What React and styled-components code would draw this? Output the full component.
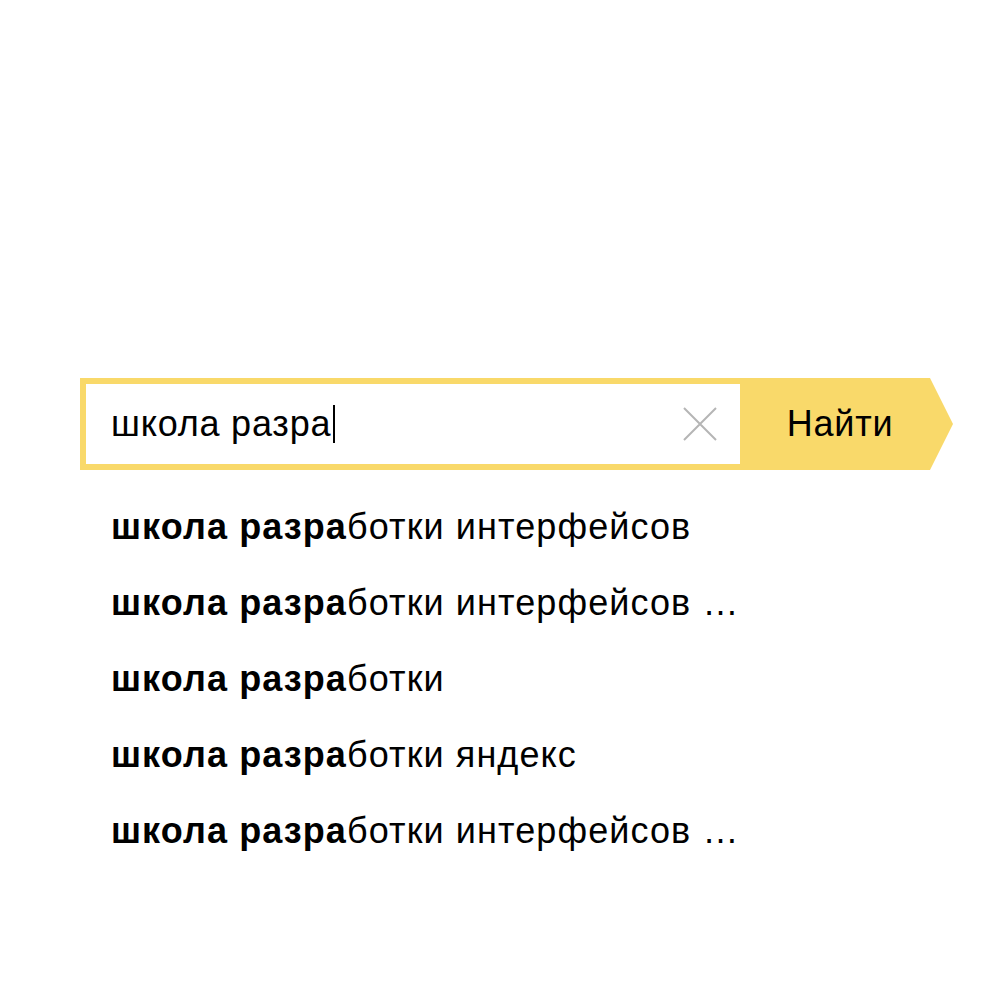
import styled, { createGlobalStyle } from "styled-components";

const GlobalStyle = createGlobalStyle`
  body {
    margin: 0;
    background: #fff;
    font-family: "Liberation Sans", Arial, sans-serif;
  }
`;

const Page = styled.div`
  width: 1000px;
  height: 1000px;
  padding: 378px 0 0 80px;
  box-sizing: border-box;
`;

const Form = styled.div`
  display: flex;
  height: 92px;
`;

const InputBox = styled.div`
  width: 660px;
  box-sizing: border-box;
  border: 6px solid #f9d96a;
  border-right: none;
  display: flex;
  align-items: center;
  padding: 0 23px 0 25px;
  font-size: 36px;
  letter-spacing: 0.8px;
  color: #000;
`;

const Value = styled.div`
  flex: 1;
  display: flex;
  align-items: center;
  white-space: pre;
`;

const Caret = styled.span`
  display: inline-block;
  width: 2px;
  height: 38px;
  background: #000;
  margin-left: 2px;
`;

const Clear = styled.div`
  width: 34px;
  height: 34px;
  display: flex;
`;

const Button = styled.button`
  width: 213px;
  height: 92px;
  border: none;
  margin: 0;
  padding: 0 13px 0 0;
  background: #f9d96a;
  clip-path: polygon(0 0, 190px 0, 213px 50%, 190px 100%, 0 100%);
  font-family: "Liberation Sans", Arial, sans-serif;
  font-size: 36px;
  letter-spacing: 0.8px;
  color: #000;
  text-align: center;
`;

const List = styled.ul`
  list-style: none;
  margin: 19px 0 0;
  padding: 0 0 0 31px;
`;

const Item = styled.li`
  height: 76px;
  line-height: 76px;
  font-size: 36px;
  letter-spacing: 1.1px;
  color: #000;
  white-space: nowrap;
  b {
    font-weight: 700;
  }
`;

const suggestions = [
  "ботки интерфейсов",
  "ботки интерфейсов …",
  "ботки",
  "ботки яндекс",
  "ботки интерфейсов …",
];

export default function App() {
  return (
    <>
      <GlobalStyle />
      <Page>
        <Form>
          <InputBox>
            <Value>
              школа разра
              <Caret />
            </Value>
            <Clear>
              <svg width="34" height="34" viewBox="0 0 34 34">
                <path d="M1 1L33 33M33 1L1 33" stroke="#b5b5b5" strokeWidth="2" fill="none" />
              </svg>
            </Clear>
          </InputBox>
          <Button>Найти</Button>
        </Form>
        <List>
          {suggestions.map((rest, i) => (
            <Item key={i}>
              <b>школа разра</b>
              {rest}
            </Item>
          ))}
        </List>
      </Page>
    </>
  );
}
